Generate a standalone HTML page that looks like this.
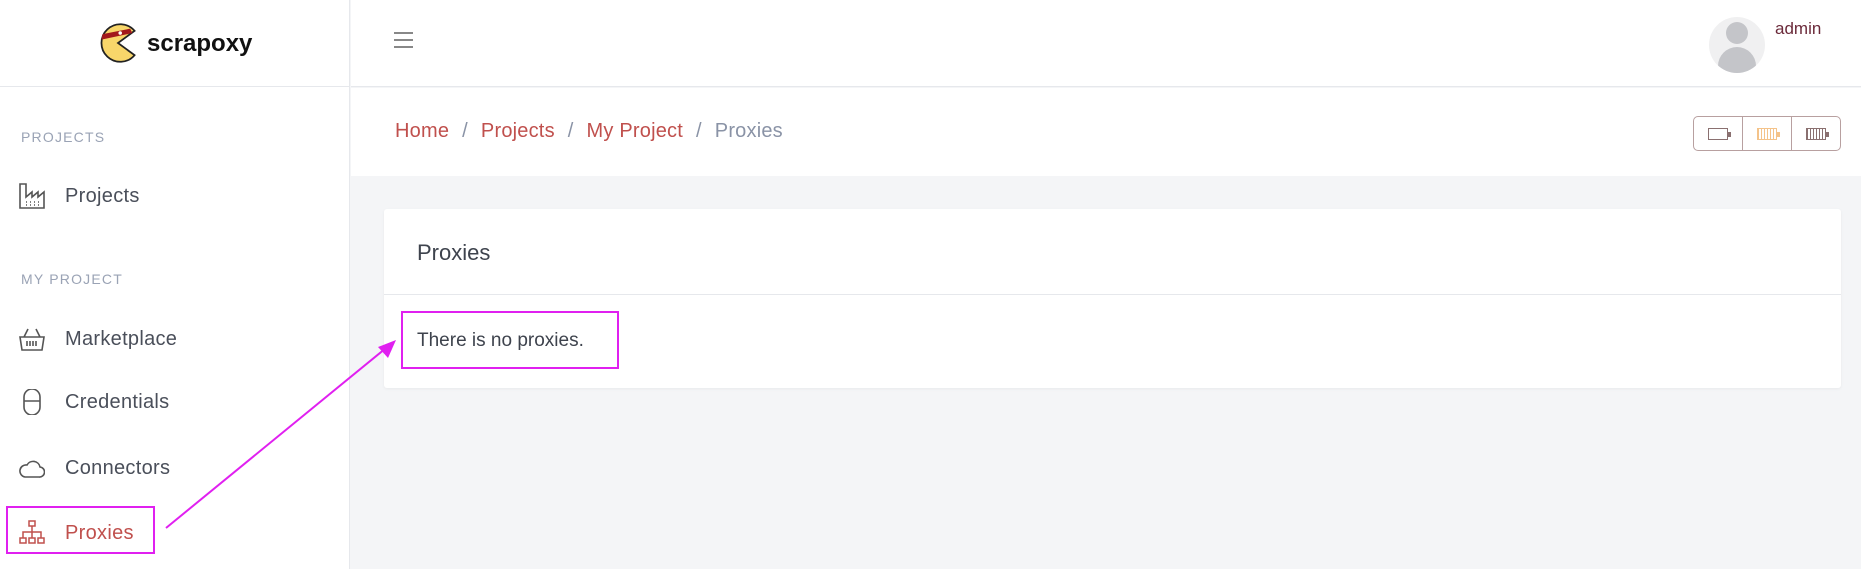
<!DOCTYPE html>
<html><head><meta charset="utf-8"><style>
*{margin:0;padding:0;box-sizing:border-box}
body{width:1861px;height:569px;overflow:hidden;background:#f4f5f7;font-family:"Liberation Sans",sans-serif;position:relative}
.abs{position:absolute}
#side{left:0;top:0;width:350px;height:569px;background:#fff;border-right:1px solid #e6e8ec}
#logo{left:0;top:0;width:350px;height:87px;border-bottom:1px solid #e6e8ec}
#top{left:351px;top:0;width:1510px;height:87px;background:#fff;border-bottom:1px solid #e6e8ec}
#bc{left:351px;top:88px;width:1510px;height:88px;background:#fff}
.lbl{font-size:14px;letter-spacing:1.2px;color:#9aa3b5}
.item{font-size:20px;color:#4a4f5a;letter-spacing:0.3px}
.ic{left:19px;width:26px;height:26px}
.sep{color:#8a93a6;margin:0 13px}
</style></head><body>
<div id="side" class="abs"></div>
<div id="logo" class="abs">
<svg class="abs" style="left:97px;top:22px" width="42" height="42" viewBox="0 0 38 38">
<path d="M34 8 A17 17 0 1 0 34 30 L19 19 Z" fill="#f8d66a" stroke="#222" stroke-width="1.6"/>
<path d="M5 11 L30 6 L32 10 L4 16 Z" fill="#a3191c"/>
<circle cx="21" cy="10" r="1.6" fill="#fff"/></svg>
<div class="abs" style="left:147px;top:30px;font-size:24px;font-weight:bold;color:#111">scrapoxy</div>
</div>
<div class="abs lbl" style="left:21px;top:129px">PROJECTS</div>
<svg class="abs ic" style="top:183px" viewBox="0 0 26 26" fill="none" stroke="#555" stroke-width="1.6"><path d="M1 1v24h24V9l-6 5V9l-6 5V9l-6 5V1z"/><path d="M7 19h1M11 19h1M15 19h1M19 19h1M7 22h1M11 22h1M15 22h1M19 22h1" stroke-width="1.4"/></svg>
<div class="abs item" style="left:65px;top:185px">Projects</div>
<div class="abs lbl" style="left:21px;top:271px">MY PROJECT</div>
<svg class="abs ic" style="top:326px" viewBox="0 0 26 26" fill="none" stroke="#555" stroke-width="1.6"><path d="M1 11h24l-2 13H3z M5 11l4-8M21 11l-4-8M8 15v5M11 15v5M14 15v5M17 15v5"/></svg>
<div class="abs item" style="left:65px;top:328px">Marketplace</div>
<svg class="abs ic" style="top:389px" viewBox="0 0 26 26" fill="none" stroke="#555" stroke-width="1.6"><path d="M5 12V8a8 8 0 0 1 16 0v4M5 12h16v6a8 8 0 0 1-16 0z"/></svg>
<div class="abs item" style="left:65px;top:391px">Credentials</div>
<svg class="abs ic" style="top:455px" viewBox="0 0 26 26" fill="none" stroke="#555" stroke-width="1.6"><path d="M6 22h14a5 5 0 0 0 1-10 7 7 0 0 0-13-2 6 6 0 0 0-2 12z"/></svg>
<div class="abs item" style="left:65px;top:457px">Connectors</div>
<svg class="abs ic" style="top:520px" viewBox="0 0 26 26" fill="none" stroke="#c0504d" stroke-width="1.5"><rect x="10" y="1" width="6" height="5"/><rect x="1" y="18" width="6" height="5"/><rect x="10" y="18" width="6" height="5"/><rect x="19" y="18" width="6" height="5"/><path d="M13 6v12M4 18v-6h18v6"/></svg>
<div class="abs item" style="left:65px;top:522px;color:#c0504d">Proxies</div>
<div class="abs" style="left:6px;top:506px;width:149px;height:48px;border:2px solid #e020f0"></div>

<div id="top" class="abs"></div>
<div class="abs" style="left:394px;top:32px;width:19px;height:2px;background:#888;box-shadow:0 7px 0 #888,0 14px 0 #888"></div>
<div class="abs" style="left:1709px;top:17px;width:56px;height:56px;border-radius:50%;background:#f0f0f1;overflow:hidden">
<div class="abs" style="left:17px;top:5px;width:22px;height:22px;border-radius:50%;background:#c4c5c9"></div>
<div class="abs" style="left:9px;top:30px;width:38px;height:34px;border-radius:19px 19px 0 0;background:#c4c5c9"></div></div>
<div class="abs" style="left:1775px;top:19px;font-size:17px;color:#6b2a3a">admin</div>

<div id="bc" class="abs"></div>
<div class="abs" style="left:395px;top:120px;font-size:20px;color:#c0504d;white-space:nowrap;letter-spacing:0.2px">Home<span class="sep">/</span>Projects<span class="sep">/</span>My Project<span class="sep">/</span><span style="color:#8a93a6">Proxies</span></div>
<div class="abs" style="left:1693px;top:116px;width:148px;height:35px;border:1px solid #b8a0a0;border-radius:5px;display:flex">
<div style="flex:1;border-right:1px solid #b8a0a0;position:relative"><div class="abs" style="left:14px;top:11px;width:20px;height:12px;border:1.5px solid #8a7070"></div><div class="abs" style="left:34px;top:15px;width:3px;height:5px;background:#8a7070"></div></div>
<div style="flex:1;border-right:1px solid #b8a0a0;position:relative"><div class="abs" style="left:14px;top:11px;width:20px;height:12px;border:1.5px solid #f4c38a;background:repeating-linear-gradient(90deg,#f4c38a 0 1px,#fff 1px 3px)"></div><div class="abs" style="left:34px;top:15px;width:3px;height:5px;background:#f4c38a"></div></div>
<div style="flex:1;position:relative"><div class="abs" style="left:14px;top:11px;width:20px;height:12px;border:1.5px solid #8a7070;background:repeating-linear-gradient(90deg,#8a7070 0 1px,#fff 1px 3px)"></div><div class="abs" style="left:34px;top:15px;width:3px;height:5px;background:#8a7070"></div></div>
</div>

<div class="abs" style="left:384px;top:209px;width:1457px;height:179px;background:#fff;border-radius:3px;box-shadow:0 1px 3px rgba(0,0,0,.05)">
<div class="abs" style="left:33px;top:31px;font-size:22px;color:#3e434d">Proxies</div>
<div class="abs" style="left:0;top:85px;width:100%;height:1px;background:#e6e8ec"></div>
<div class="abs" style="left:33px;top:121px;font-size:19px;color:#3e434d">There is no proxies.</div>
</div>
<div class="abs" style="left:401px;top:311px;width:218px;height:58px;border:2px solid #e020f0"></div>
<svg class="abs" style="left:0;top:0" width="1861" height="569"><line x1="166" y1="528" x2="386" y2="348" stroke="#e020f0" stroke-width="2"/><path d="M396 340 L378 347 L388 358 Z" fill="#e020f0"/></svg>
</body></html>
